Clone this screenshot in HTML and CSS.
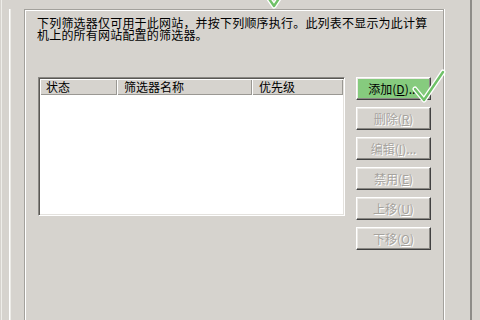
FILE: index.html
```html
<!DOCTYPE html>
<html lang="zh-CN">
<head>
<meta charset="utf-8">
<title>筛选器</title>
<link rel="stylesheet" href="styles.css">
</head>
<body>
<div class="win">
  <div class="tab">
    <div class="group">
      <p class="desc">下列筛选器仅可用于此网站，并按下列顺序执行。此列表不显示为此计算机上的所有网站配置的筛选器。</p>
      <div class="row">
        <div class="list">
          <div class="head">
            <div class="col c1">状态</div>
            <div class="col c2">筛选器名称</div>
            <div class="col c3">优先级</div>
          </div>
        </div>
        <div class="btns">
          <button class="btn primary">添加(<u>D</u>)...<svg class="check" width="36" height="36" viewBox="0 0 36 36"><polyline points="4,20 13,31 32,3" fill="none" stroke="#ffffff" stroke-width="5" stroke-linejoin="round" stroke-linecap="round"/><polyline points="4,20 13,31 32,3" fill="none" stroke="#6fc168" stroke-width="2.4" stroke-linejoin="round" stroke-linecap="round"/></svg></button>
          <button class="btn off">删除(<u>R</u>)</button>
          <button class="btn off">编辑(<u>I</u>)...</button>
          <button class="btn off">禁用(<u>E</u>)</button>
          <button class="btn off">上移(<u>U</u>)</button>
          <button class="btn off">下移(<u>O</u>)</button>
        </div>
      </div>
    </div>
  </div>
  <svg class="topcheck" width="26" height="24" viewBox="0 0 26 24"><polyline points="5,8 12,18 22,3" fill="none" stroke="#ffffff" stroke-width="5" stroke-linejoin="round" stroke-linecap="round"/><polyline points="5,8 12,18 22,3" fill="none" stroke="#6fc168" stroke-width="2.4" stroke-linejoin="round" stroke-linecap="round"/></svg>
</div>
</body>
</html>
```

FILE: styles.css
```css
* { box-sizing: border-box; }
html, body {
  margin: 0;
  padding: 0;
  background: #d6d3ce;
  width: 480px;
  height: 320px;
  overflow: hidden;
  font-family: "Noto Sans CJK SC", "Liberation Sans", sans-serif;
  font-size: 12px;
  color: #000;
}
.win {
  position: relative;
  margin-left: 1px;
  width: 471px;
  height: 320px;
  border-left: 1px solid #eeede9;
  border-right: 2px solid #8e8c88;
  overflow: hidden;
}
.tab {
  margin-left: 7px;
  height: 100%;
  border-left: 1px solid #ffffff;
  box-shadow: inset 1px 0 0 #ecebe7;
}
.group {
  margin-left: 14px;
  margin-top: 9px;
  width: 420px;
  height: 340px;
  border: 1px solid #a3a19c;
  box-shadow: inset 1px 1px 0 #ffffff, 1px 0 0 #ffffff;
  padding: 7px 0 0 12px;
}
.desc {
  margin: 0;
  width: 396px;
  line-height: 12px;
  letter-spacing: 0.2px;
}
.row {
  display: flex;
  gap: 11px;
  margin-top: 36px;
  margin-left: 1px;
}
.list {
  width: 307px;
  height: 139px;
  background: #ffffff;
  border: 1px solid;
  border-color: #8a8884 #ffffff #ffffff #8a8884;
  box-shadow: inset 1px 1px 0 #5a5854, inset -1px -1px 0 #e4e2de;
  padding: 1px;
}
.head {
  display: flex;
  height: 16px;
}
.col {
  background: #d6d3ce;
  box-shadow: inset 1px 1px 0 #ffffff, inset -1px -1px 0 #9a9893;
  line-height: 16px;
  padding-left: 7px;
  white-space: nowrap;
}
.c1 { width: 77px; padding-left: 6px; }
.c2 { width: 135px; }
.c3 { flex: 1; }
.btns {
  display: flex;
  flex-direction: column;
  gap: 7px;
}
.btn {
  position: relative;
  width: 75px;
  height: 23px;
  padding: 0;
  background: #d6d3ce;
  border: 1px solid;
  border-color: #ffffff #404040 #404040 #ffffff;
  box-shadow: inset -1px -1px 0 #8a8884, inset 1px 1px 0 #ebe9e5;
  font-family: "Noto Sans CJK SC", "Liberation Sans", sans-serif;
  font-size: 12px;
  line-height: 20px;
  text-align: center;
  white-space: nowrap;
  overflow: visible;
}
.btn u { text-decoration: underline; }
.primary {
  background: #86cb7e;
  color: #000;
}
.off {
  color: #a6a39e;
  text-shadow: 1px 1px 0 #ffffff;
}
.check {
  position: absolute;
  left: 54px;
  top: -9px;
}
.topcheck {
  position: absolute;
  left: 260px;
  top: -12px;
}
```
